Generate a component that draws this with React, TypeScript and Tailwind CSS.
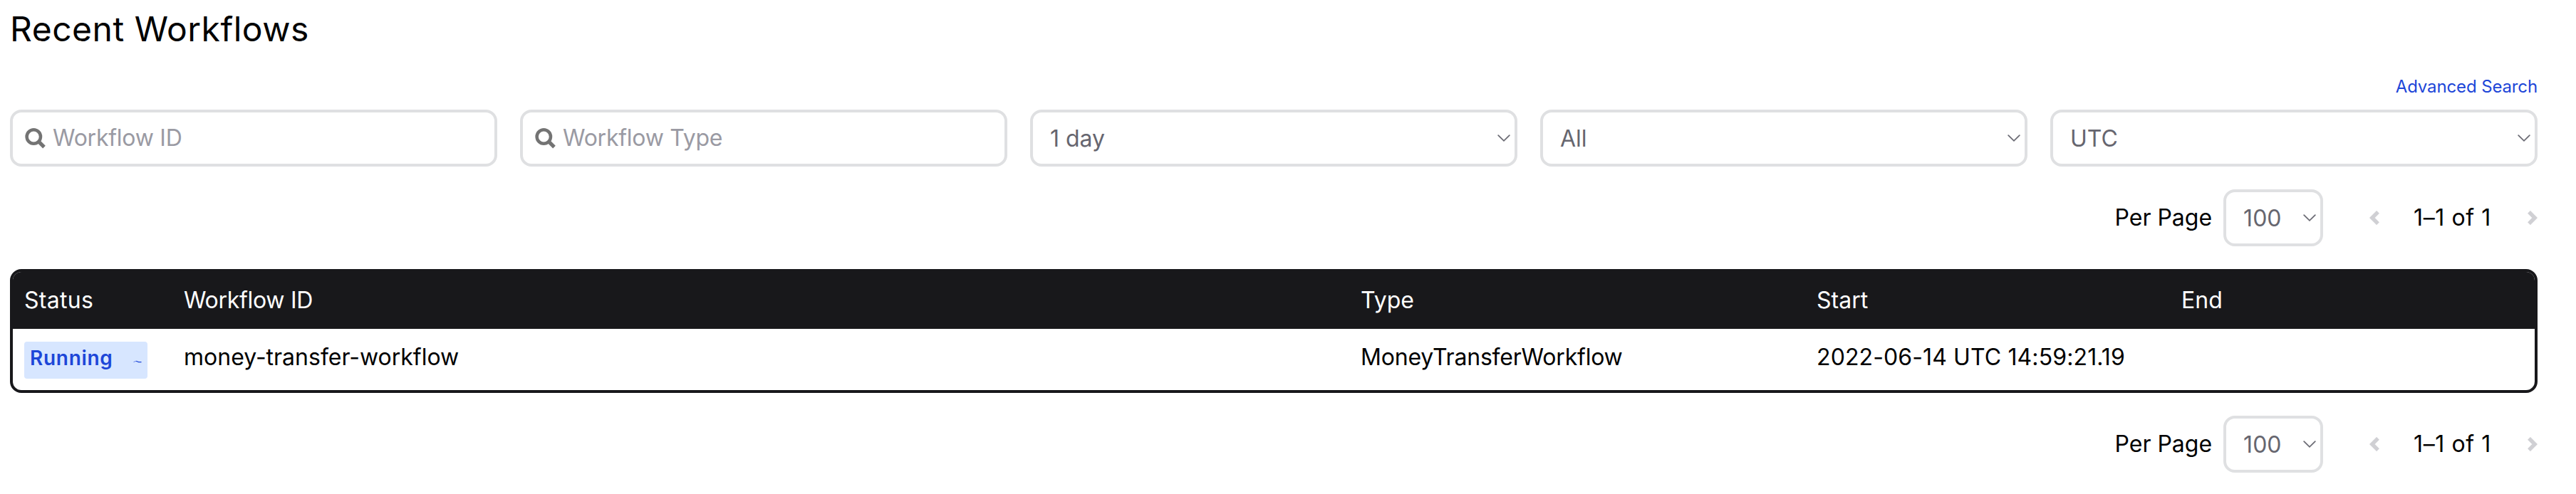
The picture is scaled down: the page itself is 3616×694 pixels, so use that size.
import type { ReactNode } from "react";

function SearchIcon() {
  return (
    <svg viewBox="0 0 29 29" className="h-[29px] w-[29px] shrink-0" fill="none" stroke="#737373">
      <circle cx="12.3" cy="12" r="9.7" strokeWidth="4.5" />
      <path d="M19 18.7 L27 26.7" strokeWidth="5.2" />
    </svg>
  );
}

function SelectArrow() {
  return (
    <svg viewBox="0 0 18 12" className="h-3 w-[18px] shrink-0" fill="none" stroke="#6b6b74" strokeWidth="1.8">
      <path d="M1.2 2.2 L9 9.8 L16.8 2.2" strokeLinecap="round" />
    </svg>
  );
}

function PageArrow({ flip = false }: { flip?: boolean }) {
  return (
    <svg viewBox="0 0 14 20" className={flip ? "h-5 w-3.5 shrink-0 -scale-x-100" : "h-5 w-3.5 shrink-0"} fill="none" stroke="#d0d0d4" strokeWidth="5.4">
      <path d="M12 1.8 L3.8 10 L12 18.2" />
    </svg>
  );
}

function Field({ children }: { children: ReactNode }) {
  return (
    <div className="flex h-20 min-w-0 items-center gap-2.5 rounded-[16px] border-4 border-[#dfe0e2] pl-[17px]">
      <SearchIcon />
      <span className="tracking-[-0.25px] text-[#9a9aa3]">{children}</span>
    </div>
  );
}

function Select({ children }: { children: ReactNode }) {
  return (
    <div className="flex h-20 min-w-0 flex-1 items-center justify-between rounded-[16px] border-4 border-[#dfe0e2] pl-6 pr-1.5">
      <span className="pt-0.5 text-[#66666f]">{children}</span>
      <SelectArrow />
    </div>
  );
}

function Pagination() {
  return (
    <div className="flex h-20 items-center justify-end">
      <span>Per Page</span>
      <div className="ml-4 flex w-[140px]">
        <Select>100</Select>
      </div>
      <div className="ml-[65px] flex items-center">
        <PageArrow />
        <span className="ml-[48px] mr-[51px] tracking-[0.6px]">1–1 of 1</span>
        <PageArrow flip />
      </div>
    </div>
  );
}

const columns = "grid grid-cols-[224px_1652px_640px_512px_1fr] pl-4";

export default function App() {
  return (
    <main className="h-[694px] w-full bg-white pl-3.5 pr-[54px] pt-2 font-[Inter,sans-serif] text-[32px] leading-[48px] text-black">
      <h1 className="h-16 pt-px text-[48px] font-[430] leading-[64px] tracking-[0.5px]">Recent Workflows</h1>
      <div className="mt-8 flex h-[34px] justify-end pt-px text-[24px] leading-[34px] tracking-[-0.13px] text-[#1d46d8]">
        <a>Advanced Search</a>
      </div>
      <div className="mt-4 grid grid-cols-5 gap-8">
        <Field>Workflow ID</Field>
        <Field>Workflow Type</Field>
        <Select>1 day</Select>
        <Select>All</Select>
        <Select>UTC</Select>
      </div>
      <div className="mt-8">
        <Pagination />
      </div>
      <section className="mt-8 h-[174px] overflow-hidden rounded-[16px] border-4 border-[#18181b]">
        <div className={columns + " h-20 items-center bg-[#18181b] text-white"}>
          <span className="tracking-[0.3px]">Status</span>
          <span className="tracking-[-0.3px]">Workflow ID</span>
          <span>Type</span>
          <span>Start</span>
          <span>End</span>
        </div>
        <div className={columns + " h-[86px] pt-4"}>
          <div className="mt-0.5 flex h-[52px] w-[173px] justify-between rounded-[4px] bg-[#d7e6ff] px-2 text-[#1d46d8]">
            <span className="text-[28px] font-semibold leading-[47px] tracking-[0.7px]">Running</span>
            <svg viewBox="0 0 12 4" className="mt-[26px] h-1 w-3" fill="none" stroke="currentColor">
              <path d="M0.5 2.6 L4 1.3" strokeWidth="0.6" />
              <path d="M4 1.2 L7.5 2.6 H11.5" strokeWidth="1.2" />
            </svg>
          </div>
          <span>money-transfer-workflow</span>
          <span className="tracking-[-0.2px]">MoneyTransferWorkflow</span>
          <span className="tracking-[0.11px]">2022-06-14 UTC 14:59:21.19</span>
          <span />
        </div>
      </section>
      <div className="mt-8">
        <Pagination />
      </div>
    </main>
  );
}
